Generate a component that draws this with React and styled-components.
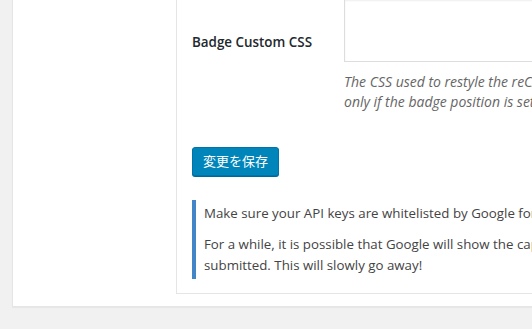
import React from 'react';
import styled, { createGlobalStyle } from 'styled-components';

const GlobalStyle = createGlobalStyle`
    html, body {
        margin: 0;
        background: #f1f1f1;
        overflow: hidden;
        font-family: "Open Sans", "Noto Sans", "Noto Sans CJK JP", sans-serif;
        color: #444;
    }
`
const Wrap = styled.div`
    width: 900px;
    padding-left: 12px;
    padding-bottom: 21px;
`
const Panel = styled.div`
    display: flex;
    background: #fff;
    border: 1px solid #e5e5e5;
    border-top: none;
    box-shadow: 0 1px 1px rgba(0, 0, 0, 0.04);
    padding-bottom: 12px;
`
const Sidebar = styled.div`
    width: 163px;
    flex-shrink: 0;
`
const Content = styled.div`
    flex: 1;
    border-left: 1px solid #e5e5e5;
    border-bottom: 1px solid #e5e5e5;
    padding: 0 0 14px 15px;
`
const FormRow = styled.div`
    display: grid;
    grid-template-columns: 152px 1fr;
`
const Label = styled.div`
    padding-top: 32px;
    font-size: 13.4px;
    line-height: 21px;
    font-weight: 600;
    color: #23282d;
`
const Textarea = styled.div`
    height: 61px;
    border: 1px solid #ddd;
    border-top: none;
    box-shadow: inset 0 1px 2px rgba(0, 0, 0, 0.07);
`
const Description = styled.p`
    margin: 10px 0 0;
    font-size: 14px;
    line-height: 20px;
    font-style: italic;
    color: #666;
    white-space: nowrap;
`
const Submit = styled.div`
    padding-top: 35px;
`
const Button = styled.button`
    height: 29px;
    padding: 0 10px 1px;
    font-family: "Noto Sans CJK JP", sans-serif;
    font-size: 13px;
    line-height: 26px;
    color: #fff;
    background: #0085ba;
    border: 1px solid #0073aa;
    border-radius: 3px;
    box-shadow: 0 1px 0 #006799;
    cursor: pointer;
`
const Notice = styled.div`
    margin-top: 24px;
    margin-right: 20px;
    border-left: 4px solid #4386c7;
    padding: 3px 8px;
`
const NoticeText = styled.p`
    margin: ${props => (props.first ? '0' : '10px 0 0')};
    font-size: 13.3px;
    line-height: 21px;
    white-space: nowrap;
`

const App = () => {
    return (
        <>
            <GlobalStyle />
            <Wrap>
                <Panel>
                    <Sidebar />
                    <Content>
                        <FormRow>
                            <Label>Badge Custom CSS</Label>
                            <div>
                                <Textarea />
                                <Description>
                                    The CSS used to restyle the reCAPTCHA badge. This style is applied
                                    <br />
                                    only if the badge position is set to inline.
                                </Description>
                            </div>
                        </FormRow>
                        <Submit>
                            <Button>変更を保存</Button>
                        </Submit>
                        <Notice>
                            <NoticeText first>Make sure your API keys are whitelisted by Google for use with invisible reCAPTCHA.</NoticeText>
                            <NoticeText>
                                For a while, it is possible that Google will show the captcha even when the form is
                                <br />
                                submitted. This will slowly go away!
                            </NoticeText>
                        </Notice>
                    </Content>
                </Panel>
            </Wrap>
        </>
    )
}

export default App
